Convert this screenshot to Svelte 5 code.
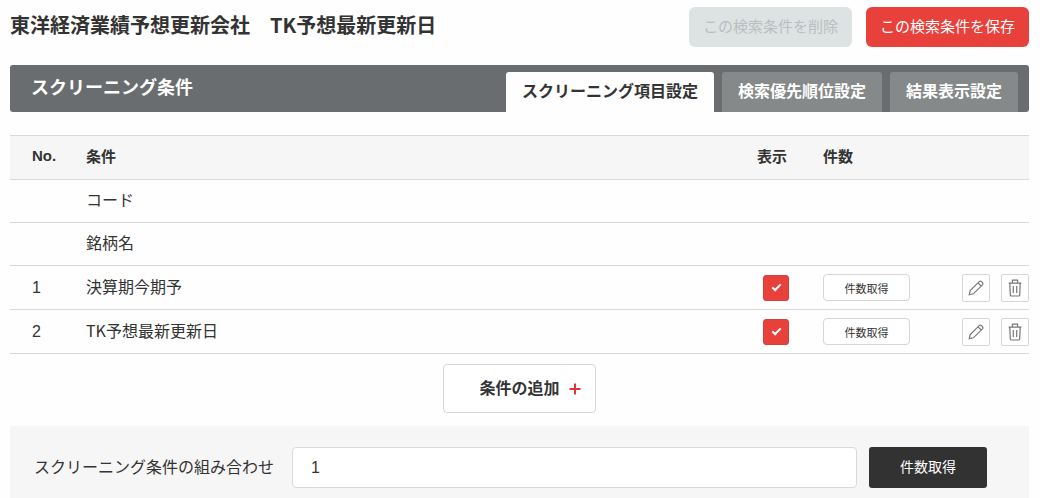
<main class="page">
    <header class="head">
        <h1>東洋経済業績予想更新会社　TK予想最新更新日</h1>
        <div class="actions">
            <button type="button" class="action" disabled>この検索条件を削除</button>
            <button type="button" class="action save">この検索条件を保存</button>
        </div>
    </header>

    <div class="bar">
        <h2>スクリーニング条件</h2>
        <div class="tabs" role="tablist">
            {#each tabs as tab, i}
                <button
                    type="button"
                    role="tab"
                    class="tab"
                    class:active={i === current}
                    aria-selected={i === current}
                    onclick={() => current = i}
                >{tab}</button>
            {/each}
        </div>
    </div>

    <table>
        <colgroup>
            <col class="c-no">
            <col>
            <col class="c-show">
            <col class="c-count">
            <col class="c-tools">
        </colgroup>
        <thead>
            <tr>
                <th class="no">No.</th>
                <th>条件</th>
                <th>表示</th>
                <th>件数</th>
                <td></td>
            </tr>
        </thead>
        <tbody>
            {#each rows as row}
                <tr class:item={row.no}>
                    <td class="no">{row.no ?? ''}</td>
                    <td class="name">{row.name}</td>
                    {#if row.no}
                        <td class="show"><input type="checkbox" bind:checked={row.show} aria-label="表示"></td>
                        <td><button type="button" class="count">件数取得</button></td>
                        <td>
                            <div class="tools">
                                <button type="button" class="tool" aria-label="編集">
                                    <svg viewBox="0 0 16 16" width="16" height="16">
                                        <path d="M1.2 14.8 2.2 10.6 11.2 1.6Q12.4.6 13.6 1.7L14.3 2.4Q15.4 3.6 14.4 4.8L5.4 13.8ZM10 2.8 13.2 6"/>
                                    </svg>
                                </button>
                                <button type="button" class="tool" aria-label="削除" onclick={() => remove(row)}>
                                    <svg viewBox="0 0 14 18" width="14" height="18">
                                        <path d="M.6 4.2H13.4M4.4 4V1.2H9.6V4M1.8 4.4 2.3 16.2Q2.4 17 3.2 17H10.8Q11.6 17 11.7 16.2L12.2 4.4M5.3 7V14M8.7 7V14"/>
                                    </svg>
                                </button>
                            </div>
                        </td>
                    {:else}
                        <td></td>
                        <td></td>
                        <td></td>
                    {/if}
                </tr>
            {/each}
        </tbody>
    </table>

    <div class="add-row">
        <button type="button" class="add">
            <span>条件の追加</span>
            <svg viewBox="0 0 12 12" width="12" height="12">
                <path d="M6 .5V11.5M.5 6H11.5"/>
            </svg>
        </button>
    </div>

    <form class="combine" onsubmit={e => e.preventDefault()}>
        <label for="formula">スクリーニング条件の組み合わせ</label>
        <input id="formula" type="text" bind:value={formula}>
        <button type="submit">件数取得</button>
    </form>
</main>

<script>
    const tabs = ['スクリーニング項目設定', '検索優先順位設定', '結果表示設定'];

    let current = $state(0);
    let formula = $state('1');
    let rows = $state([
        { name: 'コード' },
        { name: '銘柄名' },
        { no: 1, name: '決算期今期予', show: true },
        { no: 2, name: 'TK予想最新更新日', show: true }
    ]);

    const remove = row => rows = rows.filter(r => r !== row);
</script>

<style>
    :global(body) {
        margin: 0;
        background: #fefefe;
    }

    .page {
        padding: 7px 11px 0 10px;
        color: #333333;
        font-family: "Noto Sans CJK JP", sans-serif;
        font-size: 16px;
        line-height: 24px;
    }

    button,
    input {
        box-sizing: border-box;
        margin: 0;
        font-family: inherit;
        color: inherit;
    }

    button {
        padding: 0;
        border: 0;
        cursor: pointer;
    }

    h1,
    h2 {
        margin: 0;
        font-weight: bold;
    }

    .head {
        display: flex;
        justify-content: space-between;
        align-items: center;
        margin-bottom: 18px;
    }

    h1 {
        padding-bottom: 4px;
        font-size: 20px;
    }

    .actions {
        display: flex;
        gap: 14px;
    }

    .action {
        height: 40px;
        padding: 0 14px 4px;
        border-radius: 6px;
        background: #dde2e3;
        color: #b9bfc1;
        font-size: 15px;
    }

    .action.save {
        background: #e8403a;
        color: #ffffff;
    }

    .bar {
        display: flex;
        justify-content: space-between;
        height: 47px;
        padding: 0 11px 0 21px;
        box-sizing: border-box;
        border-radius: 3px;
        background: #696d6f;
    }

    h2 {
        color: #ffffff;
        font-size: 18px;
        line-height: 42px;
    }

    .tabs {
        display: flex;
        align-items: flex-end;
        gap: 8px;
    }

    .tab {
        height: 40px;
        padding: 0 16px 4px;
        border-radius: 3px 3px 0 0;
        background: #868989;
        color: #ffffff;
        font-size: 16px;
        font-weight: bold;
    }

    .tab.active {
        background: #fefefe;
        color: #333333;
    }

    table {
        width: 100%;
        margin: 23px 0 10px;
        table-layout: fixed;
        border-spacing: 0;
    }

    .c-no {
        width: 76px;
    }

    .c-show {
        width: 66px;
    }

    .c-count {
        width: 110px;
    }

    .c-tools {
        width: 96px;
    }

    th,
    td {
        height: 42px;
        padding: 0;
        border-bottom: 1px solid #d9d9d9;
        text-align: left;
    }

    .item td {
        height: 43px;
    }

    thead th,
    thead td {
        height: 40px;
        padding-bottom: 3px;
        border-top: 1px solid #d9d9d9;
        background: #f6f6f6;
        font-size: 15px;
    }

    td.name {
        height: 38px;
        padding-bottom: 4px;
    }

    .item td.name {
        height: 39px;
    }

    .no {
        padding-left: 22px;
        font-family: "Liberation Sans", "Noto Sans CJK JP", sans-serif;
    }

    .show {
        padding-left: 6px;
    }

    input[type=checkbox] {
        display: grid;
        place-items: center;
        width: 26px;
        height: 26px;
        appearance: none;
        border: 1px solid #d3413c;
        border-radius: 3px;
        background: #ffffff;
    }

    input[type=checkbox]:checked {
        background: #e8403a;
    }

    input[type=checkbox]:checked::after {
        content: "";
        width: 7px;
        height: 3px;
        margin-bottom: 2px;
        border: solid #ffffff;
        border-width: 0 0 2px 2px;
        transform: rotate(-45deg);
    }

    .count {
        display: block;
        width: 87px;
        height: 27px;
        border: 1px solid #d6d6d6;
        border-radius: 4px;
        background: #ffffff;
        font-size: 11px;
    }

    .tools {
        display: flex;
        justify-content: flex-end;
        gap: 11px;
    }

    .tool {
        display: grid;
        place-items: center;
        width: 28px;
        height: 28px;
        border: 1px solid #d6d6d6;
        border-radius: 2px;
        background: #ffffff;
    }

    svg {
        fill: none;
        stroke: #777777;
        stroke-width: 1.2;
    }

    .add-row {
        display: flex;
        justify-content: center;
        margin-bottom: 13px;
    }

    .add {
        display: flex;
        align-items: center;
        gap: 9px;
        height: 49px;
        padding: 0 14px 0 35px;
        border: 1px solid #d6d6d6;
        border-radius: 4px;
        background: #ffffff;
        font-size: 16px;
        font-weight: bold;
    }

    .add span {
        padding-bottom: 4px;
    }

    .add svg {
        stroke: #dc3438;
        stroke-width: 2;
    }

    .combine {
        display: flex;
        align-items: center;
        padding: 21px 42px 10px 24px;
        background: #f6f6f6;
    }

    .combine label {
        padding-bottom: 4px;
    }

    .combine input {
        flex: 1;
        min-width: 0;
        height: 41px;
        margin: 0 12px 0 18px;
        padding: 0 18px;
        border: 1px solid #d9d9d9;
        border-radius: 4px;
        background: #ffffff;
        font-family: "Liberation Sans", "Noto Sans CJK JP", sans-serif;
        font-size: 16px;
    }

    .combine button {
        width: 118px;
        height: 41px;
        padding-bottom: 4px;
        border-radius: 3px;
        background: #323232;
        color: #ffffff;
        font-size: 14px;
    }
</style>
